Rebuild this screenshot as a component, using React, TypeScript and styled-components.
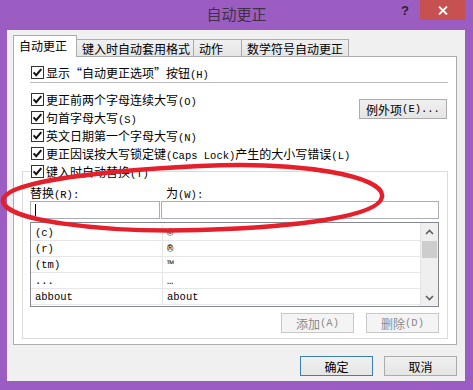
import React from 'react';
import styled, { createGlobalStyle } from 'styled-components';

const PURPLE = '#9b5dc1';

const Global = createGlobalStyle`
  *, *::before, *::after { box-sizing: border-box; }
  html, body { margin: 0; padding: 0; background: ${PURPLE}; }
  body { font-family: "Noto Sans CJK SC", sans-serif; }
`;

const Window = styled.div`
  position: relative;
  width: 473px;
  height: 390px;
  background: ${PURPLE};
  display: flex;
  flex-direction: column;
  overflow: hidden;
  font-family: "Noto Sans CJK SC", sans-serif;
  font-size: 12px;
  color: #000;
`;

const TitleBar = styled.div`
  height: 30px;
  flex: none;
  display: grid;
  grid-template-columns: 1fr auto 1fr;
  align-items: start;
`;

const Title = styled.div`
  grid-column: 2;
  font-size: 15px;
  line-height: 27px;
  color: #3f2f4b;
`;

const Controls = styled.div`
  grid-column: 3;
  justify-self: end;
  display: flex;
  margin-right: 8px;
`;

const HelpBtn = styled.div`
  width: 22px;
  height: 20px;
  margin-right: 4px;
  display: flex;
  align-items: center;
  justify-content: center;
  font-family: "Liberation Sans", sans-serif;
  font-weight: bold;
  font-size: 13px;
  color: #2b1d38;
`;

const CloseBtn = styled.div`
  width: 45px;
  height: 20px;
  background: #c75050;
  display: flex;
  align-items: center;
  justify-content: center;
`;

const Client = styled.div`
  flex: 1;
  margin: 0 8px 9px 7px;
  background: #f0f0f0;
  display: flex;
  flex-direction: column;
  padding: 5px 8px 5px 6px;
`;

const TabStrip = styled.div`
  position: relative;
  z-index: 1;
  height: 22px;
  margin-bottom: -1px;
  display: flex;
  align-items: flex-end;
`;

const Tab = styled.div<{ $w: number; $active?: boolean }>`
  width: ${p => p.$w}px;
  height: ${p => (p.$active ? 22 : 18)}px;
  margin-left: ${p => (p.$active ? 0 : -1)}px;
  padding-left: 5px;
  display: flex;
  align-items: center;
  border: 1px solid #acacac;
  border-bottom: ${p => (p.$active ? 'none' : '1px solid #acacac')};
  background: ${p => (p.$active ? '#fff' : 'linear-gradient(#f0f0f0, #e5e5e5)')};
  position: relative;
  z-index: ${p => (p.$active ? 2 : 1)};
  padding-bottom: ${p => (p.$active ? 2 : 0)}px;
  white-space: nowrap;
`;

const Panel = styled.div`
  height: 289px;
  flex: none;
  background: #fff;
  border: 1px solid #acacac;
  padding: 0 8px;
  display: flex;
  flex-direction: column;
`;

const CheckRow = styled.div<{ $top?: number }>`
  height: 18px;
  margin-top: ${p => p.$top ?? 0}px;
  margin-left: 9px;
  display: flex;
  align-items: center;
  gap: 2px;
  white-space: nowrap;
`;

const Separator = styled.div`
  height: 1px;
  margin: 1px 0 0 8px;
  background: #bcbcbc;
`;

const OptionsBlock = styled.div`
  margin-top: 7px;
  display: flex;
  justify-content: space-between;
  align-items: flex-start;
`;

const OptionsCol = styled.div`
  display: flex;
  flex-direction: column;
`;

const Button = styled.div<{ $w?: number; $disabled?: boolean; $default?: boolean }>`
  width: ${p => p.$w ?? 73}px;
  height: 20px;
  flex: none;
  display: flex;
  align-items: center;
  justify-content: center;
  white-space: nowrap;
  background: ${p => (p.$disabled ? '#f4f4f4' : 'linear-gradient(#f0f0f0, #e5e5e5)')};
  border: 1px solid ${p => (p.$default ? '#3c7fb1' : p.$disabled ? '#c8c8c8' : '#acacac')};
  color: ${p => (p.$disabled ? '#8a8a8a' : '#000')};
`;

const ExceptionBtn = styled(Button)`
  margin-top: 9px;
  margin-right: 1px;
`;

const Group = styled.div`
  margin-top: 9px;
  border: 1px solid #dcdcdc;
  padding: 0 8px 5px 7px;
  display: flex;
  flex-direction: column;
`;

const Legend = styled(CheckRow)`
  margin-top: -10px;
  margin-left: 1px;
  align-self: flex-start;
  background: #fff;
  padding-right: 3px;
`;

const FieldGrid = styled.div`
  display: grid;
  grid-template-columns: 130px 1fr;
  column-gap: 1px;
`;

const FieldLabel = styled.div<{ $indent?: number }>`
  margin-top: 5px;
  height: 15px;
  line-height: 15px;
  padding-left: ${p => p.$indent ?? 0}px;
  white-space: nowrap;
`;

const TextBox = styled.div`
  margin-top: 1px;
  height: 18px;
  border: 1px solid #abadb3;
  background: #fff;
  display: flex;
  align-items: center;
`;

const Caret = styled.span`
  width: 1px;
  height: 12px;
  margin-left: 4px;
  background: #000;
`;

const List = styled.div`
  margin-top: 3px;
  height: 85px;
  border: 1px solid #828790;
  background: #fff;
  display: flex;
  overflow: hidden;
`;

const ListBody = styled.div`
  flex: 1;
  padding-top: 2px;
  display: grid;
  grid-template-columns: 132px 1fr;
  grid-auto-rows: 16px;
  align-content: start;
`;

const Cell = styled.div<{ $first?: boolean }>`
  padding-left: 4px;
  display: flex;
  align-items: center;
  border-bottom: 1px solid #e6e6e6;
  border-right: ${p => (p.$first ? '1px solid #e6e6e6' : 'none')};
  white-space: nowrap;
  overflow: hidden;
`;

const ScrollBar = styled.div`
  width: 18px;
  flex: none;
  background: #efefef;
  border-left: 1px solid #e3e3e3;
  display: flex;
  flex-direction: column;
  align-items: center;
`;

const ScrollArrow = styled.div`
  height: 17px;
  width: 100%;
  display: flex;
  align-items: center;
  justify-content: center;
`;

const Thumb = styled.div`
  width: 15px;
  height: 17px;
  margin-top: 1px;
  background: #cdcdcd;
`;

const ScrollTrack = styled.div`
  flex: 1;
`;

const ActionRow = styled.div`
  margin-top: 6px;
  display: flex;
  justify-content: flex-end;
  gap: 12px;
`;

const Footer = styled.div`
  margin-top: 11px;
  display: flex;
  justify-content: flex-end;
  gap: 11px;
`;

const Lat = styled.span`
  font-family: "Liberation Mono", monospace;
  font-size: 10.5px;
`;

const Overlay = styled.svg`
  position: absolute;
  left: 0;
  top: 0;
  pointer-events: none;
  z-index: 5;
`;

const CheckBox = () => (
  <svg width="13" height="13" viewBox="0 0 13 13" style={{ flex: 'none' }}>
    <rect x="0.5" y="0.5" width="12" height="12" fill="#fff" stroke="#333" />
    <path d="M2.6 6.4 L5.2 9.2 L10.3 3.2" fill="none" stroke="#111" strokeWidth="2" />
  </svg>
);

const Chevron = ({ up }: { up?: boolean }) => (
  <svg width="9" height="6" viewBox="0 0 9 6">
    <path
      d={up ? 'M1 5 L4.5 1.5 L8 5' : 'M1 1 L4.5 4.5 L8 1'}
      fill="none"
      stroke="#606060"
      strokeWidth="1.6"
    />
  </svg>
);

const rows: [string, string][] = [
  ['(c)', '©'],
  ['(r)', '®'],
  ['(tm)', '™'],
  ['...', '…'],
  ['abbout', 'about'],
];

export default function App() {
  return (
    <>
      <Global />
      <Window>
        <TitleBar>
          <Title>自动更正</Title>
          <Controls>
            <HelpBtn>?</HelpBtn>
            <CloseBtn>
              <svg width="10" height="9" viewBox="0 0 10 9">
                <path d="M1 0.5 L9 8.5 M9 0.5 L1 8.5" stroke="#fff" strokeWidth="1.8" />
              </svg>
            </CloseBtn>
          </Controls>
        </TitleBar>
        <Client>
          <TabStrip>
            <Tab $w={64} $active>自动更正</Tab>
            <Tab $w={118}>键入时自动套用格式</Tab>
            <Tab $w={49}>动作</Tab>
            <Tab $w={108}>数学符号自动更正</Tab>
          </TabStrip>
          <Panel>
            <CheckRow $top={6}>
              <CheckBox />
              <span>显示“自动更正选项”按钮<Lat>(H)</Lat></span>
            </CheckRow>
            <Separator />
            <OptionsBlock>
              <OptionsCol>
                <CheckRow>
                  <CheckBox />
                  <span>更正前两个字母连续大写<Lat>(O)</Lat></span>
                </CheckRow>
                <CheckRow>
                  <CheckBox />
                  <span>句首字母大写<Lat>(S)</Lat></span>
                </CheckRow>
                <CheckRow>
                  <CheckBox />
                  <span>英文日期第一个字母大写<Lat>(N)</Lat></span>
                </CheckRow>
              </OptionsCol>
              <ExceptionBtn $w={88}>例外项<Lat>(E)...</Lat></ExceptionBtn>
            </OptionsBlock>
            <CheckRow>
              <CheckBox />
              <span>更正因误按大写锁定键<Lat>(Caps Lock)</Lat>产生的大小写错误<Lat>(L)</Lat></span>
            </CheckRow>
            <Group>
              <Legend>
                <CheckBox />
                <span>键入时自动替换<Lat>(T)</Lat></span>
              </Legend>
              <FieldGrid>
                <FieldLabel>替换<Lat>(R):</Lat></FieldLabel>
                <FieldLabel $indent={5}>为<Lat>(W):</Lat></FieldLabel>
                <TextBox><Caret /></TextBox>
                <TextBox />
              </FieldGrid>
              <List>
                <ListBody>
                  {rows.map(([a, b]) => (
                    <React.Fragment key={a}>
                      <Cell $first><Lat>{a}</Lat></Cell>
                      <Cell><Lat>{b}</Lat></Cell>
                    </React.Fragment>
                  ))}
                </ListBody>
                <ScrollBar>
                  <ScrollArrow><Chevron up /></ScrollArrow>
                  <Thumb />
                  <ScrollTrack />
                  <ScrollArrow><Chevron /></ScrollArrow>
                </ScrollBar>
              </List>
              <ActionRow>
                <Button $w={73} $disabled>添加<Lat>(A)</Lat></Button>
                <Button $w={73} $disabled>删除<Lat>(D)</Lat></Button>
              </ActionRow>
            </Group>
          </Panel>
          <Footer>
            <Button $default>确定</Button>
            <Button>取消</Button>
          </Footer>
        </Client>
        <Overlay width="473" height="390" viewBox="0 0 473 390">
          <path
            d="M3 200 C5 184 80 172 200 166 C300 161 386 176 382 197 C379 216 300 227 200 230 C100 233 1 220 3 200 Z"
            fill="none"
            stroke="#e3202b"
            strokeWidth="4.5"
          />
        </Overlay>
      </Window>
    </>
  );
}
